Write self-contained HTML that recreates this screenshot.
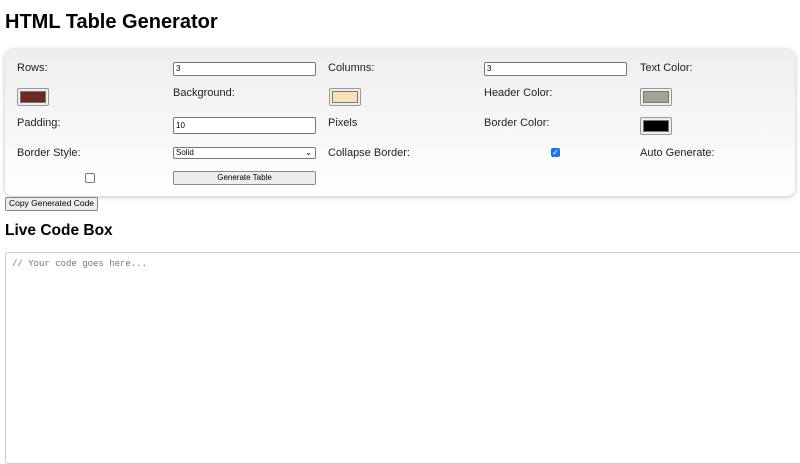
<!DOCTYPE html>
<html><head><style>
body{margin:0;width:800px;height:450px;overflow:hidden;font-family:"Liberation Sans",sans-serif;background:#fff;position:relative}
.a{position:absolute}
h1{position:absolute;left:5px;top:11px;margin:0;font-size:20px;font-weight:bold}
h2{position:absolute;left:5px;top:222px;margin:0;font-size:15.5px;font-weight:bold}
.panel{position:absolute;left:5px;top:49px;width:790px;height:147px;border-radius:8px;background:linear-gradient(#eeeeee,#ffffff);box-shadow:0 1px 5px rgba(0,0,0,.25)}
.l{position:absolute;font-size:11px;color:#222}
.in{position:absolute;width:139px;height:12px;border:1px solid #777;border-radius:2px;background:#fff;font-size:8px;padding:0 0 0 2px;line-height:12px}
.sw{position:absolute;width:26px;height:12px;border:1px solid #999;border-radius:2px;background:#eee;padding:2px}
.sw div{width:100%;height:100%;border:1px solid #777;box-sizing:border-box}
.btn{position:absolute;border:1px solid #888;border-radius:2px;background:#eee;font-size:8px;text-align:center;line-height:11px}
</style></head><body>
<h1>HTML Table Generator</h1>
<div class="panel"></div>
<div class="l" style="left:17px;top:62px">Rows:</div>
<div class="in" style="left:173px;top:62px">3</div>
<div class="l" style="left:328px;top:62px">Columns:</div>
<div class="in" style="left:484px;top:62px">3</div>
<div class="l" style="left:640px;top:62px">Text Color:</div>
<div class="sw" style="left:17px;top:88px"><div style="background:#6b2a22"></div></div>
<div class="l" style="left:173px;top:87px">Background:</div>
<div class="sw" style="left:329px;top:88px"><div style="background:#f7e2b8"></div></div>
<div class="l" style="left:484px;top:87px">Header Color:</div>
<div class="sw" style="left:640px;top:88px"><div style="background:#a6a196"></div></div>
<div class="l" style="left:17px;top:117px">Padding:</div>
<div class="in" style="left:173px;top:117px;height:15px;line-height:15px">10</div>
<div class="l" style="left:328px;top:117px">Pixels</div>
<div class="l" style="left:484px;top:117px">Border Color:</div>
<div class="sw" style="left:640px;top:117px"><div style="background:#000"></div></div>
<div class="l" style="left:17px;top:147px">Border Style:</div>
<div class="in" style="left:173px;top:147px;height:10px;line-height:10px;font-size:8px">Solid<span style="position:absolute;right:3px;top:0;font-size:8px">&#x2304;</span></div>
<div class="l" style="left:328px;top:147px">Collapse Border:</div>
<div class="a" style="left:551px;top:148px;width:9px;height:9px;background:#1a73e8;border-radius:2px;color:#fff;font-size:8px;line-height:9px;text-align:center">✓</div>
<div class="l" style="left:640px;top:147px">Auto Generate:</div>
<div class="a" style="left:85px;top:173px;width:8px;height:8px;border:1px solid #777;border-radius:2px;background:#fff"></div>
<div class="btn" style="left:173px;top:171px;width:141px;height:12px">Generate Table</div>
<div class="btn" style="left:5px;top:197px;width:91px;height:12px;font-size:8.5px;color:#000">Copy Generated Code</div>
<h2>Live Code Box</h2>
<div class="a" style="left:5px;top:252px;width:800px;height:210px;border:1px solid #ccc;border-radius:3px"></div>
<div class="a" style="left:12px;top:259px;font-family:'Liberation Mono',monospace;font-size:9px;color:#777">// Your code goes here...</div>
</body></html>
